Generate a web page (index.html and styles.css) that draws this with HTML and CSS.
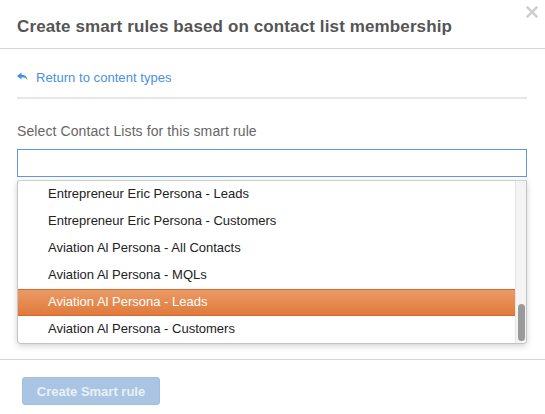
FILE: index.html
```html
<!DOCTYPE html>
<html>
<head>
<meta charset="utf-8">
<link rel="stylesheet" href="styles.css">
</head>
<body>
<div class="modal">
  <div class="header">
    <h1 class="title">Create smart rules based on contact list membership</h1>
    <span class="close">
      <svg width="12" height="12" viewBox="0 0 12 12"><path d="M1.5 1.5 L10.5 10.5 M10.5 1.5 L1.5 10.5" stroke="#cfcfcf" stroke-width="2.6" stroke-linecap="square"/></svg>
    </span>
  </div>
  <div class="body">
    <a class="back" href="#">
      <svg class="back-icon" width="11" height="9" viewBox="0 0 11 9"><path d="M0 4 L4.5 0.5 L4.5 2.8 C8 2.8 10 4.5 10.5 8 C9 6 7.5 5.3 4.5 5.3 L4.5 7.5 Z" fill="#4a90e2"/></svg>
      <span>Return to content types</span>
    </a>
    <div class="divider"></div>
    <label class="label">Select Contact Lists for this smart rule</label>
    <div class="input"></div>
    <div class="dropdown">
      <ul class="options">
        <li class="option">Entrepreneur Eric Persona - Leads</li>
        <li class="option">Entrepreneur Eric Persona - Customers</li>
        <li class="option">Aviation Al Persona - All Contacts</li>
        <li class="option">Aviation Al Persona - MQLs</li>
        <li class="option active">Aviation Al Persona - Leads</li>
        <li class="option">Aviation Al Persona - Customers</li>
      </ul>
      <div class="scrollbar"><div class="thumb"></div></div>
    </div>
  </div>
  <div class="footer">
    <button class="btn">Create Smart rule</button>
  </div>
</div>
</body>
</html>
```
FILE: styles.css
```css
* { box-sizing: border-box; }
html, body { margin: 0; padding: 0; background: #fff; }
body { font-family: "Liberation Sans", Arial, Helvetica, sans-serif; width: 545px; height: 414px; overflow: hidden; }
.modal { position: relative; width: 545px; }
.header { height: 49px; border-bottom: 1px solid #d6d6d6; padding: 0 17px; display: flex; align-items: center; }
.title { margin: 0; font-size: 17px; font-weight: bold; color: #555; padding-top: 5px; letter-spacing: 0.12px; }
.close { position: absolute; top: 6px; right: 7px; display: block; width: 12px; height: 12px; line-height: 0; }
.body { padding: 0 18px 15px 17px; }
.back { display: flex; align-items: center; height: 20px; margin-top: 18px; text-decoration: none; color: #4a90e2; font-size: 13px; letter-spacing: 0.05px; }
.back-icon { margin-right: 8px; margin-top: -2px; }
.divider { height: 2px; background: #e6e6e6; margin-top: 10px; }
.label { display: block; margin-top: 24px; font-size: 14px; color: #666; line-height: 16px; letter-spacing: 0.1px; }
.input { height: 28px; border: 1px solid #5a98ee; margin-top: 10px; background: #fff; }
.dropdown { margin-top: 3px; height: 164px; border: 1px solid #c4c4c4; border-top-color: #d0d0d0; border-radius: 0 0 4px 4px; border-top-left-radius: 3px; box-shadow: 0 2px 6px rgba(0,0,0,0.18); display: flex; overflow: hidden; background: #fff; }
.options { list-style: none; margin: 0; padding: 0; flex: 1; }
.option { height: 27px; line-height: 25px; padding-left: 30px; font-size: 13px; color: #222; }
.option.active { background: linear-gradient(#eb9a66, #e07a3b); color: #fff; border-top: 1px solid #d9692a; border-bottom: 1px solid #d9692a; line-height: 23px; }
.scrollbar { width: 11px; background: #f4f4f4; border-left: 1px solid #e4e4e4; display: flex; flex-direction: column; justify-content: flex-end; align-items: center; padding-bottom: 2px; }
.thumb { width: 7px; height: 37px; background: #9a9a9a; border-radius: 4px; }
.footer { border-top: 1px solid #d6d6d6; padding: 17px 22px; }
.btn { width: 138px; height: 28px; border: 1px solid #a3bedd; border-radius: 3px; background: #a9c5e3; color: #e8f0f8; font-family: "Liberation Sans", Arial, sans-serif; font-size: 13px; font-weight: bold; padding: 0; }
```
